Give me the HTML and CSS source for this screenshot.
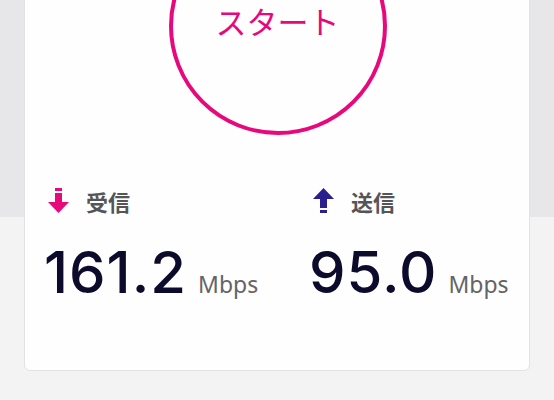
FILE: index.html
```html
<!DOCTYPE html>
<html lang="ja">
<head>
<meta charset="utf-8">
<link rel="stylesheet" href="styles.css">
</head>
<body>
<div class="page">
  <section class="card">
    <div class="start-wrap">
      <button class="start"><span class="start-text">スタート</span></button>
    </div>
    <div class="results">
      <div class="result">
        <div class="label">
          <svg class="icon" width="21" height="25" viewBox="0 0 21 25"><rect x="7" y="0" width="7" height="3" fill="#e8087c"/><path d="M7 5H14V14H21L10.5 25L0 14H7Z" fill="#e8087c"/></svg>
          <span>受信</span>
        </div>
        <div class="value"><span class="num">161.2</span><span class="unit">Mbps</span></div>
      </div>
      <div class="result">
        <div class="label">
          <svg class="icon" width="21" height="25" viewBox="0 0 21 25"><path d="M10.5 0L21 11H14V20H7V11H0Z" fill="#2a1f8e"/><rect x="7" y="22" width="7" height="3" fill="#2a1f8e"/></svg>
          <span>送信</span>
        </div>
        <div class="value"><span class="num">95.0</span><span class="unit">Mbps</span></div>
      </div>
    </div>
  </section>
</div>
</body>
</html>
```
FILE: styles.css
```css
html, body {
  margin: 0;
  padding: 0;
}
body {
  width: 554px;
  height: 400px;
  overflow: hidden;
  background: linear-gradient(#e7e7e9 0, #e7e7e9 217px, #f3f3f4 217px);
  font-family: "Noto Sans", "Noto Sans CJK JP", sans-serif;
}
.page {
  padding: 0 24px;
}
.card {
  margin-top: -100px;
  background: #fefefe;
  border: 1px solid #e1e1e6;
  border-radius: 6px;
  padding: 16px 0 0 0;
  height: 471px;
  box-sizing: border-box;
}
.start-wrap {
  display: flex;
  justify-content: center;
}
.start {
  width: 218px;
  height: 218px;
  box-sizing: border-box;
  border: 4px solid #e8087c;
  border-radius: 50%;
  background: transparent;
  color: #e8087c;
  font-family: "Noto Sans CJK JP", sans-serif;
  font-weight: 400;
  font-size: 31px;
  padding: 0 0 12px 0;
  display: flex;
  align-items: center;
  justify-content: center;
  margin-left: 1px;
}
.start-text {
  display: block;
  line-height: 31px;
}
.results {
  display: grid;
  grid-template-columns: 265px 1fr;
  padding: 0 0 0 19px;
  margin-top: 53px;
}
.result {
  display: flex;
  flex-direction: column;
}
.label {
  display: flex;
  align-items: center;
  height: 25px;
  padding-left: 4px;
  gap: 17px;
}
.label span {
  font-family: "Noto Sans CJK JP", sans-serif;
  font-weight: 700;
  font-size: 22px;
  color: #555558;
  line-height: 1;
}
.icon {
  display: block;
  flex: none;
}
.value {
  display: flex;
  align-items: baseline;
  white-space: nowrap;
  margin-top: 30px;
  gap: 11px;
}
.num {
  font-family: Inter, sans-serif;
  font-weight: 500;
  font-size: 58px;
  line-height: 58px;
  color: #0c0b2c;
  letter-spacing: 1px;
}
.unit {
  font-family: "Noto Sans", sans-serif;
  font-size: 23px;
  color: #646468;
}
```
